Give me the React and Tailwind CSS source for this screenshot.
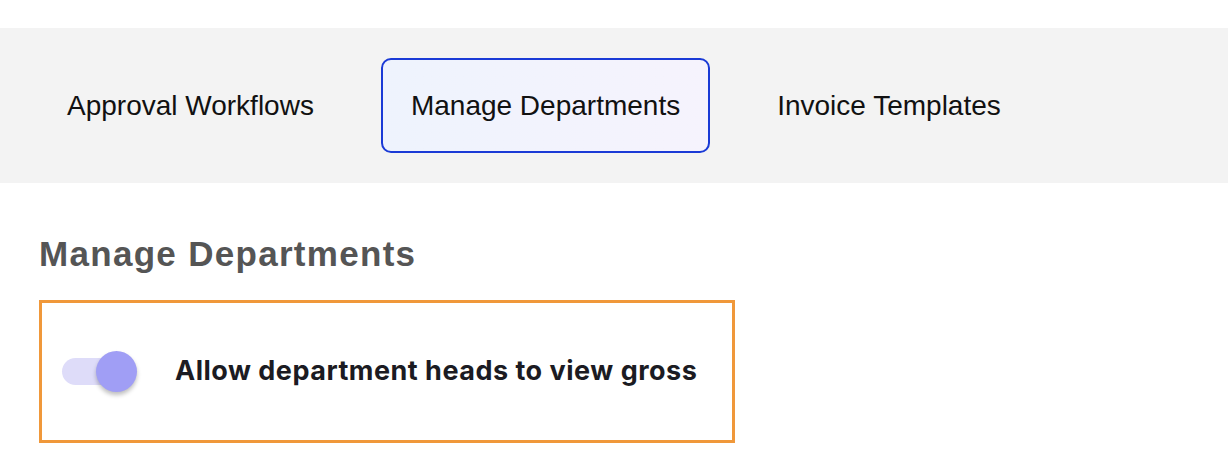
import React, { useState } from "react";

const tabs = ["Approval Workflows", "Manage Departments", "Invoice Templates"];

const App = () => {
  const [active, setActive] = useState("Manage Departments");
  const [grossOn, setGrossOn] = useState(true);

  return (
    <div className="min-h-[460px] bg-white pt-[28px]">
      {/* Tabs */}
      <div className="bg-[#f3f3f3] h-[155px] flex items-center gap-[37px] pl-[37px]">
        {tabs.map((t) => (
          <button
            key={t}
            onClick={() => setActive(t)}
            className={`h-[95px] px-[28px] rounded-[10px] border-2 text-[28px] text-[#111] font-['Liberation_Sans',Arial,sans-serif] ${
              active === t
                ? "border-[#1a3ad6] bg-gradient-to-r from-[#eef3fd] to-[#f6f3fd]"
                : "border-transparent"
            }`}
          >
            {t}
          </button>
        ))}
      </div>

      {/* Section */}
      <div className="px-[39px]">
        <h2 className="mt-[49px] text-[35px] leading-[44px] font-bold tracking-[1.3px] text-[#555555] font-['Liberation_Sans',Arial,sans-serif]">
          Manage Departments
        </h2>

        <div className="mt-[24px] w-[696px] h-[143px] border-[3.5px] border-[#f0983a] flex items-center pl-[20px]">
          <button
            onClick={() => setGrossOn(!grossOn)}
            className="relative w-[75px] h-[41px] flex items-center shrink-0"
          >
            <span className="w-[62px] h-[27px] rounded-full bg-[#dedcf9]" />
            <span
              className={`absolute top-0 w-[41px] h-[41px] rounded-full bg-[#a09ef5] shadow-[0_3px_4px_rgba(0,0,0,0.25)] ${
                grossOn ? "left-[34px]" : "left-0"
              }`}
            />
          </button>
          <span className="ml-[38px] text-[27px] font-bold text-[#1b1b22] font-['Inter',sans-serif] tracking-[0.5px]">
            Allow department heads to view gross
          </span>
        </div>
      </div>
    </div>
  );
};

export default App;
